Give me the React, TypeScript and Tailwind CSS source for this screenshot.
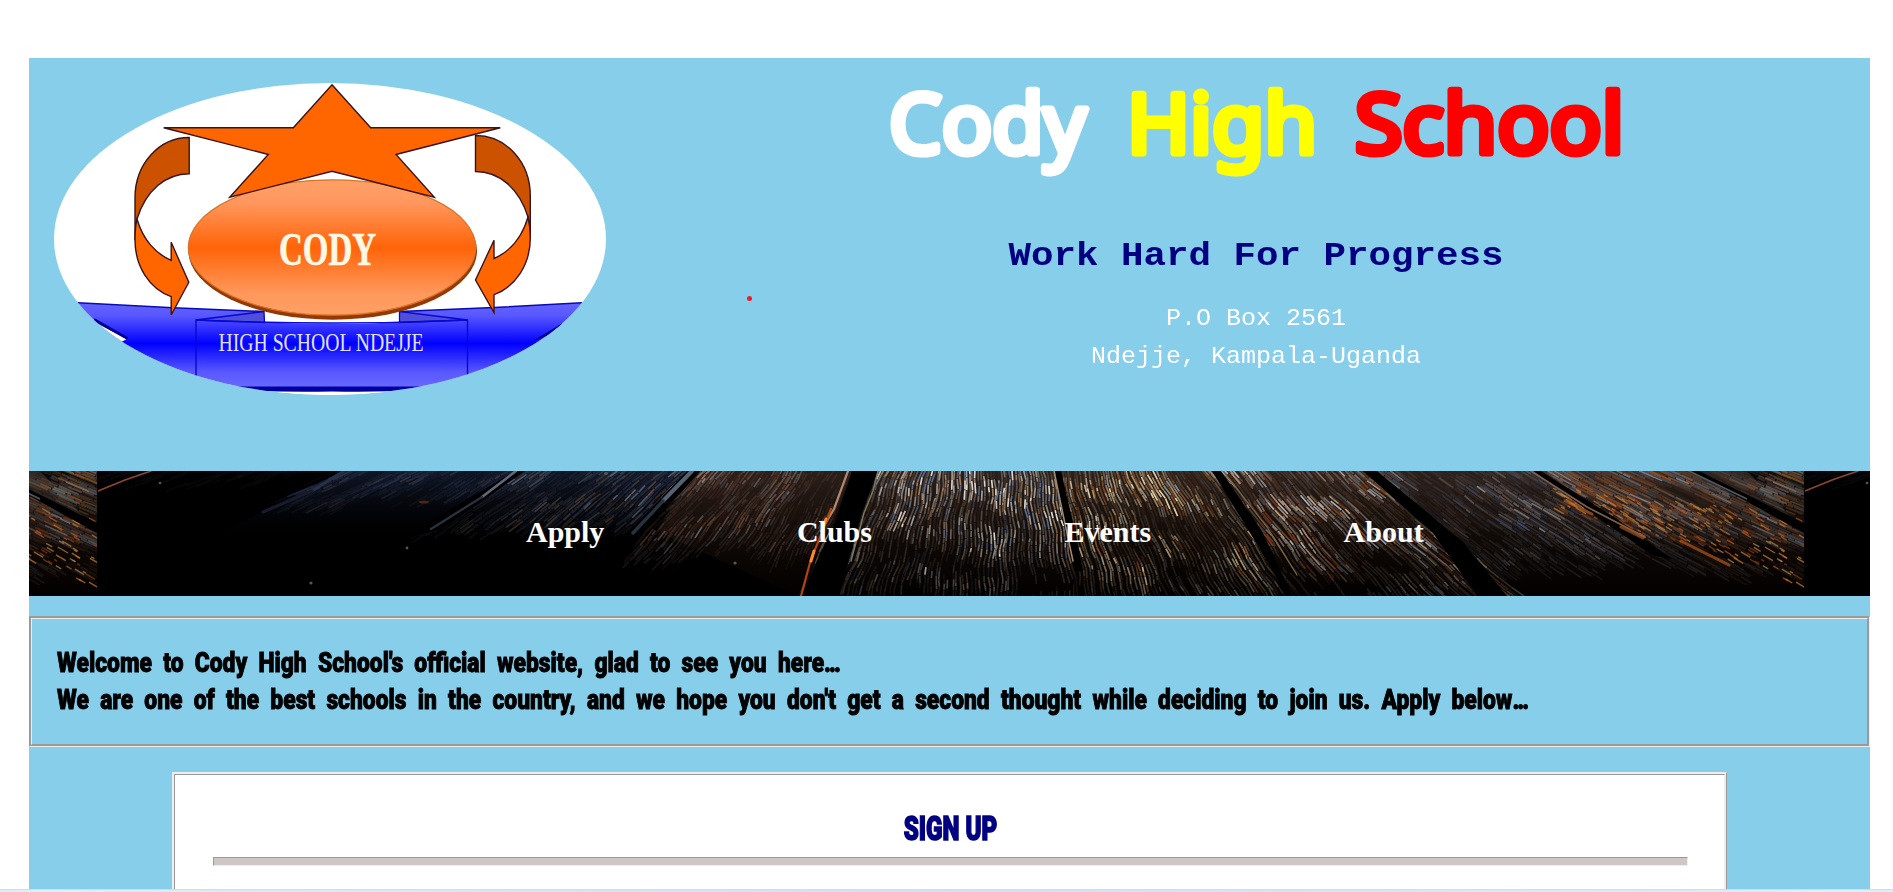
import React from "react";

const TILE_W = 1707;
const NAV_H = 125;

function createRandom(seed: number) {
  let s = seed;
  return () => {
    s = (s * 1664525 + 1013904223) % 4294967296;
    return s / 4294967296;
  };
}

type Zone = { to: number; strength: number; depth: number; colors: string[] };

// Board sections of the wooden floor, left to right, in tile coordinates.
const zones: Zone[] = [
  { to: 246, strength: 0.1, depth: 22, colors: ["#3a3a44", "#2c2c38"] },
  { to: 419, strength: 0.5, depth: 42, colors: ["#26304e", "#1c2238", "#4a4a58"] },
  { to: 596, strength: 0.7, depth: 66, colors: ["#35425f", "#5c6474", "#262d42", "#6b5648"] },
  { to: 760, strength: 0.85, depth: 98, colors: ["#6e4a3a", "#8d7060", "#4a2820", "#7f7f88"] },
  { to: 960, strength: 1.3, depth: 136, colors: ["#9c9894", "#d8d4cc", "#5e5650", "#9c7a5c", "#5a6a88"] },
  { to: 1119, strength: 1.3, depth: 146, colors: ["#a98c62", "#dccaa4", "#7d4a2a", "#8c8c84"] },
  { to: 1272, strength: 1.2, depth: 148, colors: ["#8f7f70", "#b8a088", "#7a4020", "#b0b0b8"] },
  { to: 1436, strength: 0.95, depth: 110, colors: ["#5b6478", "#9a9492", "#5c4438", "#44506a"] },
  { to: 1592, strength: 0.85, depth: 122, colors: ["#6c4a34", "#7a7a80", "#8a4c24", "#4a4c58"] },
  { to: 1707, strength: 0.8, depth: 122, colors: ["#5a4436", "#4a505c", "#80502c", "#6c6a64"] },
];

function buildNoise() {
  const rand = createRandom(2024);
  const cols = 64;
  const rows = 12;
  const cells = Array.from({ length: cols * rows }, () => rand());
  return (x: number, y: number) => {
    const gx = Math.max(0, x / 28);
    const gy = Math.max(0, y / 16);
    const ix = Math.floor(gx);
    const iy = Math.floor(gy);
    const fx = gx - ix;
    const fy = gy - iy;
    const at = (a: number, b: number) => cells[(b % rows) * cols + (a % cols)];
    const top = at(ix, iy) * (1 - fx) + at(ix + 1, iy) * fx;
    const bottom = at(ix, iy + 1) * (1 - fx) + at(ix + 1, iy + 1) * fx;
    return top * (1 - fy) + bottom * fy;
  };
}

function buildGrain() {
  const rand = createRandom(77);
  const noise = buildNoise();
  const buckets = new Map<string, string>();
  for (let line = 0; line < 590; line++) {
    const x0 = line * 2.9 + rand() * 2;
    const zone = zones.find((z) => x0 < z.to) ?? zones[zones.length - 1];
    const slope = (x0 - 903) / 300;
    const lineWeight = 0.5 + rand() * 0.8;
    const phase = Math.floor(x0 / 60) * 1.7;
    const sway = (y: number) => x0 + slope * y + Math.sin(y / 8 + phase) * 1.4 + Math.sin(y / 3 + line) * 0.4;
    let y = rand() * 3 - 3;
    while (y < NAV_H) {
      const len = 3 + rand() * 8;
      const fade = Math.max(0, 1 - Math.pow(Math.max(0, y) / zone.depth, 1.4));
      const patch = Math.max(0.15, noise(x0, Math.max(0, y)) * 1.9 - 0.3);
      const alpha = Math.min(1, zone.strength * fade * lineWeight * patch * (0.4 + rand() * 0.9));
      const step = Math.round(alpha * 7) / 7;
      if (step > 0) {
        const color = zone.colors[Math.floor(rand() * zone.colors.length)];
        const key = `${color}|${step.toFixed(3)}`;
        buckets.set(
          key,
          (buckets.get(key) ?? "") +
            `M${sway(y).toFixed(1)} ${y.toFixed(1)}L${sway(y + len).toFixed(1)} ${(y + len).toFixed(1)}`
        );
      }
      y += len + rand() * 0.8;
    }
  }
  return [...buckets.entries()].map(([key, d]) => {
    const [color, alpha] = key.split("|");
    return { color, alpha: Number(alpha), d };
  });
}

function buildEmbers() {
  const rand = createRandom(9);
  const result: Record<string, string> = { "#c8551c": "", "#d0802c": "", "#8c3c10": "", "#b08850": "" };
  const keys = Object.keys(result);
  for (let i = 0; i < 230; i++) {
    const t = rand();
    const x = 1460 + t * 245 + (rand() - 0.5) * 20;
    const y = 26 + t * 52 + (rand() - 0.5) * (20 + t * 50);
    const len = 1.5 + rand() * 4.5;
    const key = keys[Math.floor(rand() * keys.length)];
    result[key] += `M${x.toFixed(1)} ${y.toFixed(1)}l${(len * 1.7).toFixed(1)} ${len.toFixed(1)}`;
  }
  return Object.entries(result);
}

const grain = buildGrain();
const embers = buildEmbers();

function WoodBackground() {
  return (
    <svg className="absolute inset-0 h-full w-full" viewBox="0 0 1841 125" preserveAspectRatio="none" aria-hidden="true">
      <defs>
        <clipPath id="tile-clip">
          <rect width={TILE_W} height={NAV_H} />
        </clipPath>
        <filter id="soft" x="0" y="0" width="1" height="1">
          <feGaussianBlur stdDeviation="0.6" />
        </filter>
        <linearGradient id="rust" x1="0" y1="0" x2="0" y2="1">
          <stop offset="0" stopColor="#3a2a22" stopOpacity=".75" />
          <stop offset="1" stopColor="#1a0c04" stopOpacity="0.1" />
        </linearGradient>
        <linearGradient id="dusk" x1="0" y1="0" x2="0" y2="1">
          <stop offset="0" stopColor="#141c30" stopOpacity=".8" />
          <stop offset=".5" stopColor="#0a0c14" stopOpacity="0" />
        </linearGradient>
        <g id="wood" clipPath="url(#tile-clip)">
          <rect width={TILE_W} height={NAV_H} fill="#000" />
          <path d="M246 0H596L500 125H0Z" fill="url(#dusk)" />
          <path d="M596 0H1650L1707 60V125H700L560 60Z" fill="url(#rust)" />
          <g filter="url(#soft)" fill="none">
            {grain.map((g) => (
              <path key={`${g.color}-${g.alpha}`} d={g.d} stroke={g.color} strokeOpacity={g.alpha} strokeWidth="1.7" />
            ))}
            {embers.map(([color, d]) => (
              <path key={color} d={d} stroke={color} strokeOpacity=".7" strokeWidth="1.4" />
            ))}
          </g>
          <g fill="#000" filter="url(#soft)">
            <path d="M755 0H781L765 42L742 125H704L738 50Z" />
            <path d="M958 0H964L978 60L986 100H978L966 50Z" />
            <path d="M1115 0H1124L1165 60L1196 125H1190L1152 60Z" />
            <path d="M1266 0H1280L1365 70L1410 125H1380L1336 62Z" />
            <path d="M1436 0H1444L1520 48L1575 88L1555 84L1500 46Z" />
            <path d="M1594 0H1602L1707 52V62Z" />
            <path d="M590 0H604L548 60L500 125H470Z" />
            <path d="M418 0H428L345 58L300 70Z" />
          </g>
          <g fill="none" filter="url(#soft)" strokeLinecap="round">
            <path d="M54 0L28 9L1 20" stroke="#8c4630" strokeWidth="1.8" />
            <path d="M247 0L215 20" stroke="#26304c" strokeWidth="3" />
            <path d="M215 20L166 41" stroke="#141a2c" strokeWidth="3" />
            <path d="M419 0L385 26" stroke="#626878" strokeWidth="2.6" />
            <path d="M385 26L334 58" stroke="#2c3240" strokeWidth="2.2" />
            <path d="M595 0L566 30" stroke="#566272" strokeWidth="4" />
            <path d="M566 30L536 62" stroke="#283040" strokeWidth="3.4" />
            <path d="M751 0L737 38L724 60" stroke="#b08870" strokeWidth="2.2" />
            <path d="M734 38L724 64L714 88L704 125" stroke="#b0440e" strokeWidth="2.2" />
            <path d="M717 80L714 90M729 48L726 56" stroke="#ff8a2a" strokeWidth="3" />
            <path d="M781 0L776 20L767 42L754 90" stroke="#7d7a62" strokeWidth="1.4" />
            <path d="M957 0L967 48L976 90" stroke="#a08c70" strokeWidth="1.5" />
            <path d="M1126 0L1170 56L1200 104" stroke="#7c6240" strokeWidth="1.3" />
            <path d="M1434 0L1490 36L1548 66" stroke="#80604c" strokeWidth="1.7" />
            <path d="M1592 0L1650 28" stroke="#4e585e" strokeWidth="1.8" />
            <path d="M1468 30L1495 43M1524 56L1546 67M1584 70L1632 94" stroke="#d0641e" strokeWidth="3" strokeOpacity=".6" />
          </g>
          <g fill="#55565c">
            <circle cx="214" cy="112" r="1.6" />
            <circle cx="310" cy="77" r="1.4" />
            <circle cx="63" cy="12" r="1.3" />
            <circle cx="509" cy="2.5" r="1.8" />
            <circle cx="638" cy="92" r="1.6" />
          </g>
          <ellipse cx="327" cy="31" rx="5" ry="1.6" fill="#4a2418" />
        </g>
      </defs>
      <use href="#wood" x={-1639} />
      <use href="#wood" x={68} />
      <use href="#wood" x={1775} />
    </svg>
  );
}

function Crest() {
  return (
    <svg className="h-[312px] w-[552px] shrink-0 rounded-[50%] bg-white" viewBox="54 83 552 312" role="img" aria-label="Cody High School Ndejje crest">
      <defs>
        <linearGradient id="oval" x1="0" y1="0" x2="0" y2="1">
          <stop offset="0" stopColor="#ffa066" />
          <stop offset=".16" stopColor="#ff9860" />
          <stop offset=".5" stopColor="#ff6408" />
          <stop offset=".84" stopColor="#ff985c" />
          <stop offset="1" stopColor="#ffa066" />
        </linearGradient>
        <linearGradient id="ribbon" gradientUnits="userSpaceOnUse" x1="0" y1="302" x2="0" y2="387">
          <stop offset="0" stopColor="#6464ff" />
          <stop offset=".16" stopColor="#5858ff" />
          <stop offset=".49" stopColor="#0000ff" />
          <stop offset=".82" stopColor="#5858ff" />
          <stop offset="1" stopColor="#6868ff" />
        </linearGradient>
      </defs>
      <path d="M54 301L78 302.7L173 307.7L264 311.5V322.5Q332 325 399.5 322.5V311.5L494 307.5L580 302.7H606V387H54Z" fill="url(#ribbon)" />
      <path d="M54 301L78 302.7L173 307.7L264 311.5M399.5 311.5L494 307.5L582 302.7" fill="none" stroke="#0b0bb0" strokeWidth="1.5" />
      <path d="M196 320L264 311.5L264.5 322.5Z" fill="#4f4fdc" stroke="#0808c8" strokeWidth="1.3" />
      <path d="M467.5 320L399.5 311.5V322.5Z" fill="#4f4fdc" stroke="#0808c8" strokeWidth="1.3" />
      <path d="M196 387V320Q264 323 332 323Q400 323 467.5 320V387" fill="none" stroke="#0808d0" strokeWidth="1.4" />
      <path d="M98 324L127 339L121 342Q108 335 98 324Z" fill="#fff" />
      <path d="M94 319.5L127.5 338.5" fill="none" stroke="#000090" strokeWidth="2.6" />
      <path d="M562 324L535 340L548 335Z" fill="#000098" stroke="#000098" strokeWidth="1" />
      <path d="M210 386.5H450V389Q390 392.5 332 391.5Q270 392.5 210 389Z" fill="#0000a0" />
      <path d="M240 392H430V396H240Z" fill="#fff" />

      <ellipse cx="332.7" cy="250.7" rx="144.3" ry="69" fill="#943804" />
      <ellipse cx="332" cy="247.5" rx="143.7" ry="67.7" fill="url(#oval)" stroke="#d87428" strokeWidth="1.2" />
      <g stroke="#3a1418" strokeWidth="1.4" strokeLinejoin="miter">
        <path d="M332 84.7L370.7 127.7H500.3L396 154.5L434.3 197.3L332 171.3L229.7 197.3L268.3 154.5L163.7 127.7H293.3Z" fill="#ff6600" />
        <path d="M189.2 137.5V173.7C166 173.7 146 190 137 219C135 228 135 232 135 240V198C135 164 159 137.5 189.2 137.5Z" fill="#cc5200" />
        <path d="M135 240C135 232 135.5 225 137 219C143 240 156 254 171.2 260.3V242.3L188.8 282.3L171.2 315V296.7C150 289 135 267 135 240Z" fill="#ff6600" />
        <path d="M475.5 135.5V171.5C499 171.5 519 188 528 217C530 226 530.3 230 530.3 238V196C530.3 162 506 135.5 475.5 135.5Z" fill="#cc5200" />
        <path d="M530.3 238C530.3 230 529.5 223 528 217C522 238 509 252 494 258.5V240.3L475.5 280L494 312.7V294.7C515 287 530.3 265 530.3 238Z" fill="#ff6600" />
      </g>
      <g fontFamily="'Liberation Serif', serif" fill="#fff8e4">
        <text x="279" y="264.5" fontSize="47" fontWeight="700" stroke="#fff8e4" strokeWidth=".7" textLength="97" lengthAdjust="spacingAndGlyphs">CODY</text>
        <text x="218.5" y="350.5" fontSize="26" fill="#e0e0f0" textLength="205" lengthAdjust="spacingAndGlyphs">HIGH SCHOOL NDEJJE</text>
      </g>
    </svg>
  );
}

function Wordmark() {
  return (
    <svg className="block h-[130px] w-[760px] overflow-visible" viewBox="876 66 760 130" role="img" aria-label="Cody High School">
      <g fontFamily="'Noto Sans', sans-serif" fontSize="83" fontWeight="400" strokeWidth="7" strokeLinejoin="round" strokeLinecap="round">
        <text x="889" y="152.5" fill="#fff" stroke="#fff" textLength="197" lengthAdjust="spacingAndGlyphs">Cody</text>
        <text x="1127" y="152.5" fill="#ff0" stroke="#ff0" textLength="190" lengthAdjust="spacingAndGlyphs">High</text>
        <text x="1355" y="152.5" fill="red" stroke="red" textLength="269" lengthAdjust="spacingAndGlyphs">School</text>
      </g>
    </svg>
  );
}

const links = ["Apply", "Clubs", "Events", "About"];

export default function App() {
  return (
    <div className="flex h-[892px] w-full flex-col overflow-hidden bg-white">
      <main className="mt-[58px] ml-[29px] h-[831px] w-[1841px] shrink-0 overflow-hidden bg-[#87ceeb]">
        <header className="relative flex h-[413px]">
          <div className="w-[613px] shrink-0 pt-[25px] pl-[25px]">
            <Crest />
          </div>
          <span className="absolute top-[238px] left-[718px] size-[5px] rounded-full bg-[#ed1c24]" />
          <div className="flex flex-1 flex-col items-center pt-2 font-['Liberation_Mono',monospace]">
            <h1>
              <Wordmark />
            </h1>
            <h2 className="mt-[38px] origin-center scale-y-[0.9] text-[37.5px] leading-[44px] font-bold whitespace-pre text-[#000080]">
              Work Hard For Progress
            </h2>
            <p className="mt-5 origin-center scale-y-[0.95] text-center text-[25px] leading-[40px] text-white">
              P.O Box 2561
              <br />
              Ndejje, Kampala-Uganda
            </p>
          </div>
        </header>

        <nav className="relative h-[125px] overflow-hidden bg-black">
          <WoodBackground />
          <ul className="relative flex gap-[192.5px] pt-[44px] pl-[497px] font-['Liberation_Serif',serif] text-[30px] leading-[34px] font-bold text-white">
            {links.map((label) => (
              <li key={label}>
                <a href="#">{label}</a>
              </li>
            ))}
          </ul>
        </nav>

        <section className="mt-5 h-[131px] border-3 border-[#eeeeee] pt-[25px] pl-[25px] [border-style:groove]">
          <p className="origin-left scale-x-[0.83] font-['Roboto',sans-serif] text-[27.5px] leading-[37px] font-black whitespace-nowrap text-black [-webkit-text-stroke:0.9px_black] [word-spacing:6.65px]">
            Welcome to Cody High School's official website, glad to see you here<span className="tracking-[-2.4px]">...</span>
            <br />
            We are one of the best schools in the country, and we hope you don't get a second thought while deciding to join us. Apply below<span className="tracking-[-2.4px]">...</span>
          </p>
        </section>

        <section className="mt-[25px] ml-[143px] h-[200px] w-[1555px] border-3 border-[#eeeeee] bg-white pt-[33px] pr-[36px] pl-[38px] [border-style:ridge]">
          <h3 className="h-[41px] origin-center scale-x-[0.71] text-center font-['Roboto',sans-serif] text-[34px] leading-[40px] font-black whitespace-nowrap text-[#000080] [-webkit-text-stroke:1.6px_#000080]">
            SIGN UP
          </h3>
          <div className="mt-2 h-[9px] border border-t-[#9a9a9a] border-r-[#eeeeee] border-b-[#eeeeee] border-l-[#9a9a9a] bg-[#cfc6c6]" />
        </section>
      </main>
      <div className="h-[3px] shrink-0 border-t border-[#cfdcea] bg-linear-to-r from-[#e1edf6] via-[#d3dff6] to-[#e1edf6]" />
    </div>
  );
}
